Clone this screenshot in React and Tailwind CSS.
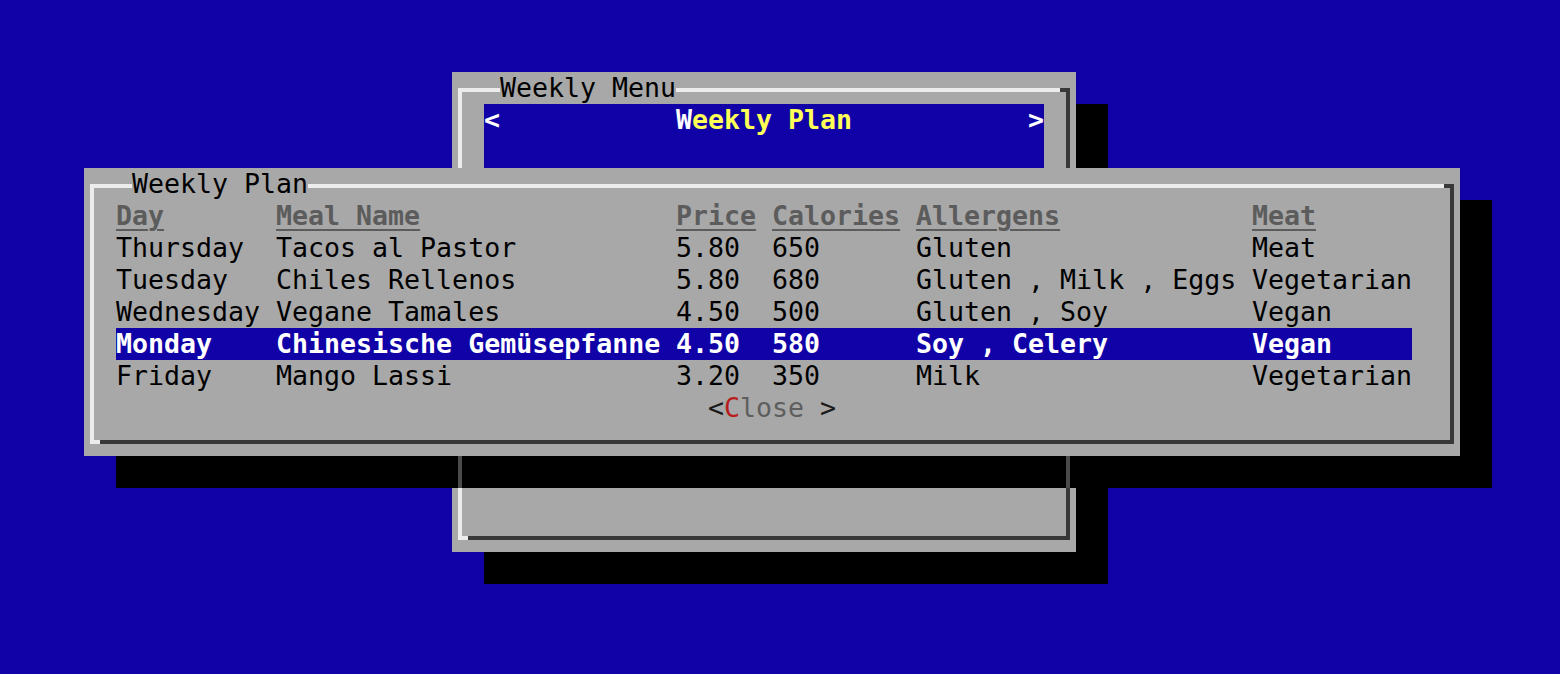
import React from 'react'

const rows = [
  ['Thursday', 'Tacos al Pastor', '5.80', '650', 'Gluten', 'Meat'],
  ['Tuesday', 'Chiles Rellenos', '5.80', '680', 'Gluten , Milk , Eggs', 'Vegetarian'],
  ['Wednesday', 'Vegane Tamales', '4.50', '500', 'Gluten , Soy', 'Vegan'],
  ['Monday', 'Chinesische Gemüsepfanne', '4.50', '580', 'Soy , Celery', 'Vegan'],
  ['Friday', 'Mango Lassi', '3.20', '350', 'Milk', 'Vegetarian'],
]

const headers = ['Day', 'Meal Name', 'Price', 'Calories', 'Allergens', 'Meat']
const widths = ['w-[160px]', 'w-[400px]', 'w-[96px]', 'w-[144px]', 'w-[336px]', 'w-[160px]']

function Window({ title, className, children }) {
  return (
    <div className={`absolute flex flex-col bg-[#a8a8a8] px-[6px] pt-4 pb-3 shadow-[32px_32px_0_0_#000] ${className}`}>
      {/* frame: light top/left, dark bottom/right */}
      <div className="relative flex flex-1 flex-col border-4 border-t-[#ececec] border-l-[#ececec] border-r-[#383838] border-b-[#383838] before:absolute before:-bottom-1 before:-left-1 before:h-1 before:w-[10px] before:bg-[#ececec] after:absolute after:-top-1 after:-right-1 after:h-1 after:w-[10px] after:bg-[#383838]">
        <div className="-mt-[20px] ml-[38px] h-8 w-fit bg-[#a8a8a8] whitespace-pre text-black">{title}</div>
        {children}
      </div>
    </div>
  )
}

export default function App() {
  return (
    <div className="relative h-[674px] w-[1560px] overflow-hidden bg-[#1102a7] font-['DejaVu_Sans_Mono',monospace] text-[26.6px] leading-8">
      <Window title="Weekly Menu" className="left-[452px] top-[72px] h-[480px] w-[624px]">
        <div className="mx-[22px] flex h-16 items-start justify-between bg-[#1102a7] font-bold">
          <span className="text-white">{'<'}</span>
          <span className="whitespace-pre">
            <span className="text-white">W</span>
            <span className="text-[#ffff55]">eekly Plan</span>
          </span>
          <span className="text-white">{'>'}</span>
        </div>
      </Window>

      <Window title="Weekly Plan" className="left-[84px] top-[168px] h-[288px] w-[1376px]">
        <div className="flex flex-col pl-[22px]">
          <div className="flex h-8">
            {headers.map((h, i) => (
              <div key={h} className={`${widths[i]} whitespace-pre`}>
                <span className="font-bold text-[#5c5c5c] underline decoration-2 underline-offset-[4px]">{h}</span>
              </div>
            ))}
          </div>
          {rows.map((r, ri) => {
            const sel = r[0] === 'Monday'
            return (
              <div
                key={ri}
                className={`flex h-8 w-[1296px] ${sel ? 'bg-[#1102a7] font-bold text-white' : 'text-black'}`}
              >
                {r.map((c, i) => (
                  <div key={i} className={`${widths[i]} whitespace-pre`}>{c}</div>
                ))}
              </div>
            )
          })}
        </div>
        <div className="flex h-8 justify-center whitespace-pre">
          <span className="text-[#1a1a1a]">{'<'}</span>
          <span className="text-[#b81c1c]">C</span>
          <span className="text-[#5e5e5e]">lose</span>
          <span className="text-[#1a1a1a]">{' >'}</span>
        </div>
      </Window>

      {/* outer window frame lines dimmed under the plan's shadow */}
      <div className="absolute left-[458px] top-[456px] h-8 w-1 bg-[#4a4a4a]" />
      <div className="absolute left-[1066px] top-[456px] h-8 w-1 bg-[#4a4a4a]" />
    </div>
  )
}
